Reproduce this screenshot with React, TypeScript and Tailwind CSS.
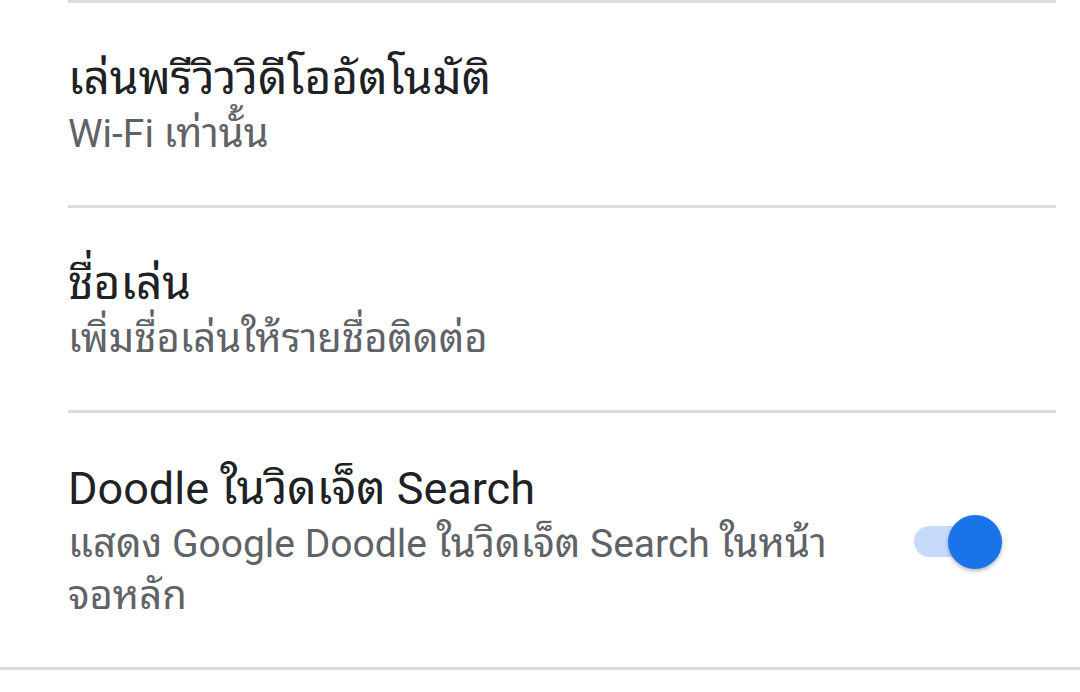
// Settings list: three preference rows with dividers, last row has a switch.

interface SettingRowProps {
  title: string;
  summary: string[];
  checked?: boolean;
}

// Thai runs get the looped Thai face, everything else stays Roboto
const Mixed = ({ text, thaiSize }: { text: string; thaiSize: string }) => (
  <>
    {text.split(/([\u0E00-\u0E7F]+)/).map((part, i) =>
      /[\u0E00-\u0E7F]/.test(part) ? (
        <span key={i} className={`font-['Noto_Sans_Thai_Looped'] leading-none ${thaiSize}`}>
          {part}
        </span>
      ) : (
        part
      )
    )}
  </>
);

const Divider = ({ full }: { full?: boolean }) => (
  <div className={full ? 'h-[3px] bg-[#dadce0]' : 'ml-[68px] mr-[24px] h-[3px] bg-[#dadce0]'} />
);

const Switch = ({ checked }: { checked: boolean }) => (
  <div className="relative w-[92px] h-[56px] flex items-center">
    {/* Track */}
    <div className={`ml-[2px] w-[86px] h-[31px] rounded-full ${checked ? 'bg-[#c6dafc]' : 'bg-[#bdc1c6]'}`} />
    {/* Thumb */}
    <div
      className={`absolute top-[2px] ${checked ? 'right-[2px]' : 'left-0'} w-[54px] h-[54px] rounded-full ${checked ? 'bg-[#1a73e8]' : 'bg-[#f1f3f4]'} shadow-[0_2px_4px_rgba(0,0,0,0.3)]`}
    />
  </div>
);

const SettingRow = ({ title, summary, checked }: SettingRowProps) => (
  <div className="flex items-center pl-[68px] pr-[76px] pt-[47px] pb-[45px]">
    <div className="flex-1">
      {/* Title */}
      <div className="h-[58px] text-[45px] leading-[58px] text-[#202124] whitespace-nowrap">
        <Mixed text={title} thaiSize="text-[46px]" />
      </div>
      {/* Summary lines */}
      {summary.map(line => (
        <div key={line} className="h-[52px] text-[39px] leading-[52px] text-[#5f6368] whitespace-nowrap">
          <Mixed text={line} thaiSize="text-[40px]" />
        </div>
      ))}
    </div>
    {checked !== undefined && <Switch checked={checked} />}
  </div>
);

export default function App() {
  return (
    <div className="w-[1080px] h-[692px] overflow-hidden bg-white font-['Roboto',sans-serif]">
      <Divider />
      <SettingRow title="เล่นพรีวิววิดีโออัตโนมัติ" summary={['Wi-Fi เท่านั้น']} />
      <Divider />
      <SettingRow title="ชื่อเล่น" summary={['เพิ่มชื่อเล่นให้รายชื่อติดต่อ']} />
      <Divider />
      <SettingRow
        title="Doodle ในวิดเจ็ต Search"
        summary={['แสดง Google Doodle ในวิดเจ็ต Search ในหน้า', 'จอหลัก']}
        checked
      />
      <Divider full />
    </div>
  );
}
